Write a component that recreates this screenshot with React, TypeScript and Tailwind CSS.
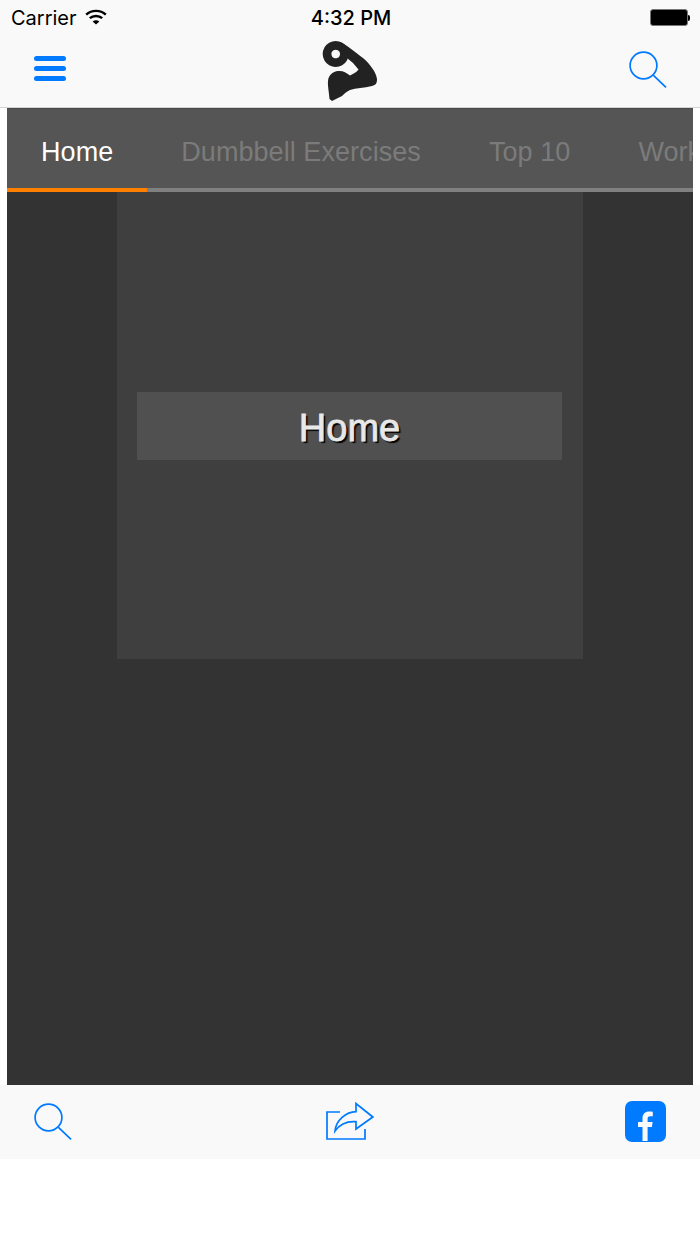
const TABS = ['Home', 'Dumbbell Exercises', 'Top 10', 'Workouts'];

function Wifi() {
  return (
    <svg className="mb-[3px]" width="22" height="16" viewBox="0 0 22 16" fill="none" stroke="#000" strokeWidth="2.4">
      <path d="M1.2 5.6C6.6 0.6 15.4 0.6 20.8 5.6" />
      <path d="M4.8 9.2C8.2 6.2 13.8 6.2 17.2 9.2" />
      <path d="M11 15.6L7.6 12.4C9.6 10.8 12.4 10.8 14.4 12.4Z" fill="#000" stroke="none" />
    </svg>
  );
}

function Battery() {
  return (
    <div className="flex items-center mb-[1px]">
      <div className="w-[38px] h-[17px] rounded-[3px] border border-[#777] bg-black" />
      <div className="w-[2px] h-[6px] rounded-r-full bg-black" />
    </div>
  );
}

function SearchGlass({ className }: { className?: string }) {
  return (
    <svg className={className} width="38" height="37" viewBox="0 0 38 37" fill="none" stroke="#007aff" strokeWidth="1.7">
      <circle cx="14.5" cy="14.5" r="13.4" />
      <path d="M24.2 24.2L37 36.4" />
    </svg>
  );
}

function Logo() {
  return (
    <svg width="60" height="66" viewBox="1 0 60 66" fill="#222">
      <path fillRule="evenodd" d="M15.7 3A13 13 0 1 1 15.69 3ZM15.7 11.7a4.3 4.3 0 1 0 0.01 0Z" />
      <path d="M20 4C27 7 36 15 43 20C50 26 56 34 57 41C57 45 56 47 52 48C44 50 36 50 30 52C26 54 24 56 22 58L12 63L9.5 61C9 54 7.5 47 8 43C8.5 37 13 33.5 18 33C23 32.5 26 34.5 30 37.5C33 36 36.5 34.5 38.5 31.5L33 25L27 20Z" />
    </svg>
  );
}

function Share() {
  return (
    <svg width="48" height="38" viewBox="0 0 48 38" fill="none" stroke="#007aff" strokeWidth="1.7">
      <path d="M14 10H1V37H39V27" />
      <path d="M9 29C10 18 20 10 30 9.7V1.5L46.8 15L30 27V19.7C21 19 14 22 9 29Z" />
    </svg>
  );
}

function Facebook() {
  return (
    <div className="w-[41px] h-[41px] rounded-[7px] bg-[#007aff] flex items-end justify-center overflow-hidden">
      <svg width="15" height="31" viewBox="0 0 15 31" fill="#f9f9f9">
        <path d="M4.5 30V16H0V11H4.5V7.5C4.5 2.8 7.2 0.5 11.2 0.5C13 0.5 14.2 0.6 14.8 0.7V5.2H12.2C10.2 5.2 9.6 6.2 9.6 7.8V11H14.6L13.9 16H9.6V30Z" />
      </svg>
    </div>
  );
}

export default function App() {
  return (
    <div className="w-[700px] h-[1244px] bg-white flex flex-col font-['Liberation_Sans',sans-serif] overflow-hidden">
      <header className="h-[108px] shrink-0 bg-[#f9f9f9] border-b border-[#d4d4d4] flex flex-col">
        <div className="h-[36px] shrink-0 grid grid-cols-3 items-center pl-[11px] pr-[10px] font-['Inter',sans-serif] text-black">
          <div className="flex items-center gap-[8px] text-[20px] leading-none">
            <span>Carrier</span>
            <Wifi />
          </div>
          <div className="pl-[1px] text-center text-[20px] font-medium leading-none whitespace-nowrap">4:32 PM</div>
          <div className="flex justify-end"><Battery /></div>
        </div>
        <div className="grid grid-cols-[1fr_auto_1fr] items-start pl-[34px] pr-[33px]">
          <div className="mt-[20px] w-[32px] flex flex-col gap-[5px]">
            <div className="h-[5px] rounded-full bg-[#007aff]" />
            <div className="h-[5px] rounded-full bg-[#007aff]" />
            <div className="h-[5px] rounded-full bg-[#007aff]" />
          </div>
          <div className="mt-[2px]"><Logo /></div>
          <div className="mt-[15px] justify-self-end"><SearchGlass /></div>
        </div>
      </header>

      <main className="mx-[7px] h-[977px] shrink-0 bg-[#333333] flex flex-col">
        <nav className="h-[84px] shrink-0 flex flex-col bg-[#555555] border-t border-[#4a4a4a]">
          <div className="h-[79px] flex overflow-hidden">
            {TABS.map((t, i) => (
              <div
                key={t}
                className={`px-[34px] pt-[7px] flex items-center shrink-0 text-[27px] tracking-[0.06px] leading-none whitespace-nowrap ${i === 0 ? 'text-white' : 'text-[#7b7b7b]'}`}
              >
                {t}
              </div>
            ))}
          </div>
          <div className="h-[4px] bg-[#808080]">
            <div className="w-[140px] h-full bg-[#ff8000]" />
          </div>
        </nav>
        <div className="w-[466px] h-[467px] mx-auto bg-[#3f3f3f] flex items-center pl-[20px] pr-[21px]">
          <div className="w-full h-[68px] pt-[4px] bg-[#505050] flex items-center justify-center text-[38px] leading-none text-[#e8e8e8] [-webkit-text-stroke:0.8px_#e8e8e8] [text-shadow:2px_2px_1px_#000]">
            Home
          </div>
        </div>
      </main>

      <footer className="h-[74px] shrink-0 bg-[#f9f9f9] flex items-start justify-between pl-[34px] pr-[34px]">
        <SearchGlass className="mt-[18px]" />
        <div className="mt-[17px] ml-[2px]"><Share /></div>
        <div className="mt-[16px]"><Facebook /></div>
      </footer>
    </div>
  );
}
